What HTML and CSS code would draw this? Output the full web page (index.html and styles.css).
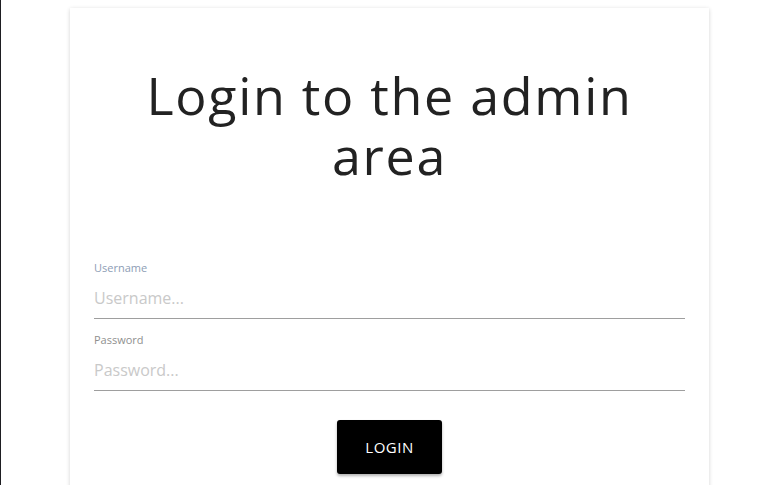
FILE: index.html
```html
<!DOCTYPE html>
<html lang="en">
<head>
<meta charset="utf-8">
<title>Admin login</title>
<link rel="stylesheet" href="styles.css">
</head>
<body>
<div class="page">
  <main class="card">
    <h1 class="title">Login to the admin area</h1>
    <form class="form">
      <div class="field">
        <label class="label label-user" for="u">Username</label>
        <input class="input" id="u" type="text" placeholder="Username...">
      </div>
      <div class="field">
        <label class="label label-pass" for="p">Password</label>
        <input class="input" id="p" type="password" placeholder="Password...">
      </div>
      <div class="actions">
        <button class="btn" type="button">LOGIN</button>
      </div>
    </form>
  </main>
</div>
</body>
</html>
```
FILE: styles.css
```css
html, body {
  margin: 0;
  padding: 0;
  background: #fff;
  height: 100%;
  overflow: hidden;
}
body {
  font-family: "Open Sans", "Noto Sans", sans-serif;
  color: #222;
}
.page {
  border-left: 1px solid #1e1e22;
  min-height: 100vh;
  padding-top: 8px;
  box-sizing: border-box;
}
.card {
  margin-left: 69px;
  width: 639px;
  min-height: 600px;
  background: #fff;
  box-shadow: 0 1px 4px rgba(0,0,0,0.18);
  padding: 57px 24px 24px;
  box-sizing: border-box;
}
.title {
  margin: 0;
  padding: 0 40px;
  text-align: center;
  font-weight: 400;
  font-size: 52px;
  letter-spacing: 1.7px;
  line-height: 60px;
  color: #222;
}
.form {
  margin-top: 76px;
}
.field {
  display: flex;
  flex-direction: column;
  margin-bottom: 14px;
}
.label {
  font-size: 11px;
  line-height: 14px;
}
.label-user { color: #8d9db5; }
.label-pass { color: #8f8f8f; }
.input {
  margin-top: 7px;
  height: 37px;
  box-sizing: border-box;
  border: none;
  border-bottom: 1px solid #9e9e9e;
  padding: 0 0 4px;
  font-family: inherit;
  font-size: 16px;
  color: #333;
  outline: none;
  background: transparent;
}
.input::placeholder { color: #c9c9c9; }
.actions {
  display: flex;
  justify-content: center;
  padding-top: 15px;
}
.btn {
  width: 105px;
  height: 54px;
  background: #000;
  color: #fff;
  border: none;
  border-radius: 3px;
  font-family: inherit;
  font-size: 15px;
  letter-spacing: 0.5px;
  box-shadow: 0 2px 3px rgba(0,0,0,0.3);
  cursor: pointer;
}
```
